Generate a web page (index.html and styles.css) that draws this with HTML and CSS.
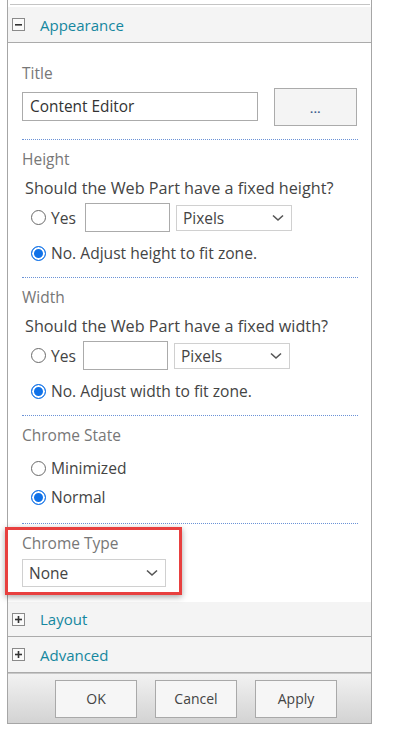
FILE: index.html
```html
<!DOCTYPE html>
<html>
<head>
<meta charset="utf-8">
<link rel="stylesheet" href="styles.css">
</head>
<body>
<div class="panel">
  <div class="prev-edge"></div>
  <div class="sec-head open">
    <span class="toggle"><svg width="13" height="13" viewBox="0 0 13 13"><rect x="0.5" y="0.5" width="12" height="12" fill="#fafafa" stroke="#8a8a8a"/><rect x="3" y="6" width="7" height="1.6" fill="#333"/></svg></span>
    <span class="sec-title">Appearance</span>
  </div>
  <div class="sec-body">
    <div class="label first">Title</div>
    <div class="title-row">
      <div class="text-input wide">Content Editor</div>
      <div class="btn-browse">...</div>
    </div>
    <div class="sep"></div>

    <div class="label">Height</div>
    <div class="question">Should the Web Part have a fixed height?</div>
    <div class="radio-row">
      <span class="radio"></span><span class="rlabel">Yes</span>
      <div class="text-input small"></div>
      <div class="select unit"><span>Pixels</span><svg class="chev" width="12" height="8" viewBox="0 0 12 8"><polyline points="1,1.5 6,6 11,1.5" fill="none" stroke="#555" stroke-width="1.6"/></svg></div>
    </div>
    <div class="radio-line"><span class="radio on"></span><span class="rlabel">No. Adjust height to fit zone.</span></div>
    <div class="sep"></div>

    <div class="label">Width</div>
    <div class="question">Should the Web Part have a fixed width?</div>
    <div class="radio-row">
      <span class="radio"></span><span class="rlabel">Yes</span>
      <div class="text-input small tight"></div>
      <div class="select unit"><span>Pixels</span><svg class="chev" width="12" height="8" viewBox="0 0 12 8"><polyline points="1,1.5 6,6 11,1.5" fill="none" stroke="#555" stroke-width="1.6"/></svg></div>
    </div>
    <div class="radio-line"><span class="radio on"></span><span class="rlabel">No. Adjust width to fit zone.</span></div>
    <div class="sep"></div>

    <div class="label">Chrome State</div>
    <div class="radio-line state-first"><span class="radio"></span><span class="rlabel">Minimized</span></div>
    <div class="radio-line state-second"><span class="radio on"></span><span class="rlabel">Normal</span></div>
    <div class="sep last"></div>

    <div class="label">Chrome Type</div>
    <div class="select type"><span>None</span><svg class="chev" width="12" height="8" viewBox="0 0 12 8"><polyline points="1,1.5 6,6 11,1.5" fill="none" stroke="#555" stroke-width="1.6"/></svg></div>
  </div>
  <div class="sec-head closed">
    <span class="toggle"><svg width="13" height="13" viewBox="0 0 13 13"><rect x="0.5" y="0.5" width="12" height="12" fill="#fafafa" stroke="#8a8a8a"/><rect x="3" y="5.7" width="7" height="1.6" fill="#333"/><rect x="5.7" y="3" width="1.6" height="7" fill="#333"/></svg></span>
    <span class="sec-title">Layout</span>
  </div>
  <div class="sec-head closed">
    <span class="toggle"><svg width="13" height="13" viewBox="0 0 13 13"><rect x="0.5" y="0.5" width="12" height="12" fill="#fafafa" stroke="#8a8a8a"/><rect x="3" y="5.7" width="7" height="1.6" fill="#333"/><rect x="5.7" y="3" width="1.6" height="7" fill="#333"/></svg></span>
    <span class="sec-title">Advanced</span>
  </div>
  <div class="footer">
    <div class="fbtn">OK</div>
    <div class="fbtn">Cancel</div>
    <div class="fbtn">Apply</div>
  </div>
  <div class="highlight"></div>
</div>
</body>
</html>
```
FILE: styles.css
```css
html, body {
  margin: 0;
  padding: 0;
  background: #ffffff;
}
body {
  font-family: "Open Sans", "Noto Sans", sans-serif;
  font-size: 14px;
  color: #444;
}
.panel {
  position: relative;
  margin-left: 7px;
  width: 363px;
  border-left: 1px solid #a6a6a6;
  border-right: 1px solid #a6a6a6;
  border-bottom: 1px solid #a6a6a6;
}
.prev-edge {
  height: 4px;
  margin: 0 1px 0 2px;
  border-bottom: 1px solid #c4c4c4;
  margin-bottom: 2px;
}
.sec-head {
  display: flex;
  align-items: center;
  height: 35px;
  background: #f4f4f4;
  border-bottom: 1px solid #ababab;
  padding-left: 4px;
}
.sec-head.closed {
  height: 34px;
}
.sec-head.closed + .sec-head.closed {
  height: 35px;
}
.toggle {
  display: flex;
  width: 13px;
  height: 13px;
}
.sec-title {
  margin-left: 15px;
  font-size: 15px;
  color: #14879f;
  line-height: 20px;
}
.sec-body {
  padding: 20px 13px 15px 14px;
}
.label {
  line-height: 20px;
  font-size: 15.5px;
  color: #777;
}
.sep {
  border-top: 1px dotted #6b92d6;
  margin-top: 14px;
  margin-bottom: 9px;
}
.sep.last {
  margin-top: 16px;
}
.title-row {
  display: flex;
  align-items: center;
  margin-top: 5px;
  height: 37px;
}
.text-input {
  box-sizing: border-box;
  border: 1px solid #ababab;
  background: #fff;
  color: #333;
  font-size: 15.4px;
  height: 29px;
  line-height: 27px;
  padding-left: 7px;
}
.text-input.wide {
  width: 236px;
  height: 29px;
}
.btn-browse {
  box-sizing: border-box;
  margin-left: 16px;
  width: 83px;
  height: 38px;
  border: 1px solid #ababab;
  background: #f4f4f4;
  text-align: center;
  line-height: 40px;
  font-size: 11px;
  color: #3a5a8a;
  font-weight: bold;
  letter-spacing: 0.5px;
}
.question {
  margin-top: 9px;
  margin-left: 3px;
  line-height: 20px;
  font-size: 16.2px;
  color: #444;
}
.radio-row {
  display: flex;
  align-items: center;
  margin-top: 5px;
  height: 29px;
  padding-left: 9px;
}
.radio-line {
  display: flex;
  align-items: center;
  margin-top: 11px;
  height: 20px;
  padding-left: 9px;
}
.radio-line.state-first {
  margin-top: 13px;
}
.radio-line.state-second {
  margin-top: 9px;
}
.radio {
  box-sizing: border-box;
  width: 15px;
  height: 15px;
  border-radius: 50%;
  border: 1px solid #6a6a6a;
  background: #fff;
  flex: none;
}
.radio.on {
  border: 1.5px solid #1172e8;
  background: #1172e8;
  box-shadow: inset 0 0 0 2px #fff;
}
.rlabel {
  margin-left: 5px;
  font-size: 15.6px;
  color: #444;
  line-height: 20px;
}
.text-input.small {
  width: 85px;
  margin-left: 9px;
}
.text-input.small.tight {
  margin-left: 7px;
}
.select {
  box-sizing: border-box;
  display: flex;
  align-items: center;
  justify-content: space-between;
  border: 1px solid #d0d0d0;
  background: #fff;
  font-size: 15.5px;
  color: #444;
  padding: 0 7px 0 6px;
}
.select.unit {
  width: 116px;
  height: 26px;
  margin-left: 6px;
}
.select.type {
  margin-top: 6px;
  width: 144px;
  height: 28px;
  padding-left: 6px;
}
.chev {
  flex: none;
}
.footer {
  display: flex;
  gap: 18px;
  padding: 6px 0 5px 47px;
  background: linear-gradient(#f2f2f2, #d3d3d3);
  border-top: 1px solid #c8c8c8;
}
.fbtn {
  box-sizing: border-box;
  width: 82px;
  height: 38px;
  border: 1px solid #a9a9a9;
  background: #f6f6f6;
  text-align: center;
  line-height: 36px;
  font-size: 14px;
  color: #444;
}
.highlight {
  position: absolute;
  left: -3px;
  top: 527px;
  width: 177px;
  height: 68px;
  box-sizing: border-box;
  border: 3px solid #e8403f;
  box-shadow: 0 2px 6px rgba(0, 0, 0, 0.35);
}
```
